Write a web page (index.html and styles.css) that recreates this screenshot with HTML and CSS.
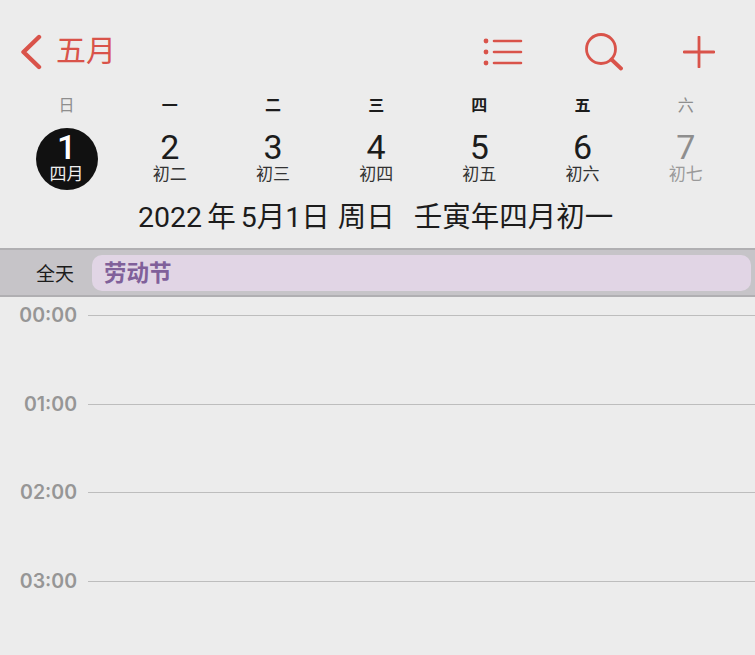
FILE: index.html
```html
<!DOCTYPE html>
<html lang="zh-CN">
<head>
    <meta charset="UTF-8">
    <title>五月</title>
    <link rel="stylesheet" href="styles.css">
</head>
<body>
    <header class="toolbar">
        <div class="back">
            <svg class="back-icon" width="22" height="36" viewBox="0 0 22 36">
                <path d="M19 3 L3.5 18 L19 33" fill="none" stroke="#d9534a" stroke-width="4.4" stroke-linecap="round" stroke-linejoin="round"/>
            </svg>
            <span class="back-label">五月</span>
        </div>
        <div class="actions">
            <svg class="action list-icon" width="40" height="30" viewBox="0 0 40 30">
                <circle cx="3" cy="4" r="2.4" fill="#d9534a"/>
                <circle cx="3" cy="15" r="2.4" fill="#d9534a"/>
                <circle cx="3" cy="26" r="2.4" fill="#d9534a"/>
                <path d="M11 4 H38 M11 15 H38 M11 26 H38" stroke="#d9534a" stroke-width="2.6" stroke-linecap="round"/>
            </svg>
            <svg class="action" width="38" height="38" viewBox="0 0 38 38">
                <circle cx="16" cy="16" r="14.5" fill="none" stroke="#d9534a" stroke-width="2.8"/>
                <path d="M26.5 26.5 L36 35.5" stroke="#d9534a" stroke-width="3.8" stroke-linecap="round"/>
            </svg>
            <svg class="action" width="32" height="32" viewBox="0 0 32 32">
                <path d="M16 1 V31 M1 16 H31" stroke="#d9534a" stroke-width="2.8" stroke-linecap="round"/>
            </svg>
        </div>
    </header>

    <div class="week-labels">
        <span class="muted">日</span>
        <span>一</span>
        <span>二</span>
        <span>三</span>
        <span>四</span>
        <span>五</span>
        <span class="muted">六</span>
    </div>

    <div class="week-days">
        <div class="day selected"><b>1</b><small>四月</small></div>
        <div class="day"><b>2</b><small>初二</small></div>
        <div class="day"><b>3</b><small>初三</small></div>
        <div class="day"><b>4</b><small>初四</small></div>
        <div class="day"><b>5</b><small>初五</small></div>
        <div class="day"><b>6</b><small>初六</small></div>
        <div class="day muted"><b>7</b><small>初七</small></div>
    </div>

    <h1 class="date-title">
        <span>2022 年 5月1日</span>
        <span class="date-week">周日</span>
        <span class="date-lunar">壬寅年四月初一</span>
    </h1>

    <section class="all-day">
        <span class="all-day-label">全天</span>
        <div class="event">劳动节</div>
    </section>

    <section class="timeline">
        <div class="hour"><span>00:00</span><i></i></div>
        <div class="hour"><span>01:00</span><i></i></div>
        <div class="hour"><span>02:00</span><i></i></div>
        <div class="hour"><span>03:00</span><i></i></div>
    </section>
</body>
</html>
```

FILE: styles.css
```css
* {
    margin: 0;
    padding: 0;
    box-sizing: border-box;
}

body {
    width: 755px;
    height: 655px;
    overflow: hidden;
    background: #ececec;
    color: #1c1c1c;
    font-family: Roboto, "Noto Sans CJK SC", sans-serif;
}

.toolbar {
    height: 89px;
    padding: 15px 40px 0 20px;
    display: flex;
    align-items: center;
    justify-content: space-between;
}

.back {
    display: flex;
    align-items: center;
    gap: 14px;
}

.back-label {
    font-size: 30px;
    line-height: 32px;
    margin-bottom: 3px;
    color: #d9534a;
}

.actions {
    display: flex;
    align-items: center;
    gap: 60px;
}

.list-icon {
    margin-right: 2px;
}

.week-labels,
.week-days {
    display: grid;
    grid-template-columns: repeat(7, 103.2px);
    padding-left: 15px;
    text-align: center;
}

.week-labels {
    height: 30px;
    align-items: center;
    font-size: 16px;
    font-weight: 700;
}

.week-labels .muted {
    color: #8e8e8e;
    font-weight: 400;
}

.week-days {
    height: 80px;
    justify-items: center;
    padding-top: 9px;
}

.day {
    width: 62px;
    height: 62px;
    display: flex;
    flex-direction: column;
    align-items: center;
    padding-top: 3px;
}

.day b {
    font-size: 34px;
    line-height: 33px;
    font-weight: 400;
}

.day small {
    font-size: 17px;
    line-height: 20px;
    color: #333;
}

.day.selected {
    background: #111;
    border-radius: 50%;
    color: #fff;
}

.day.selected b {
    font-weight: 500;
}

.day.selected small {
    color: #eee;
}

.day.muted b {
    color: #8e8e8e;
}

.day.muted small {
    color: #9a9a9a;
}

.date-title {
    height: 49px;
    padding-left: 138px;
    display: flex;
    font-size: 28.5px;
    line-height: 38px;
    font-weight: 400;
    white-space: nowrap;
    word-spacing: -2px;
}

.date-week {
    margin-left: 8px;
}

.date-lunar {
    margin-left: 19px;
}

.all-day {
    height: 49px;
    display: flex;
    align-items: center;
    padding: 0 4px 0 36px;
    gap: 18px;
    background: #c6c4c8;
    border-top: 2px solid #b0afb2;
    border-bottom: 2px solid #b0afb2;
}

.all-day-label {
    font-size: 19px;
}

.event {
    flex: 1;
    height: 36px;
    padding-left: 12px;
    background: #e1d5e5;
    border-radius: 10px;
    color: #80609a;
    font-size: 22.5px;
    font-weight: 700;
    line-height: 36px;
}

.timeline {
    padding-top: 4px;
}

.hour {
    height: 88.5px;
    display: flex;
    align-items: flex-start;
}

.hour span {
    width: 88px;
    padding-right: 11px;
    text-align: right;
    font-family: Inter, sans-serif;
    font-size: 19.5px;
    line-height: 28px;
    font-weight: 600;
    color: #969696;
}

.hour i {
    flex: 1;
    margin-top: 14px;
    height: 1px;
    background: #bdbdbd;
}
```
